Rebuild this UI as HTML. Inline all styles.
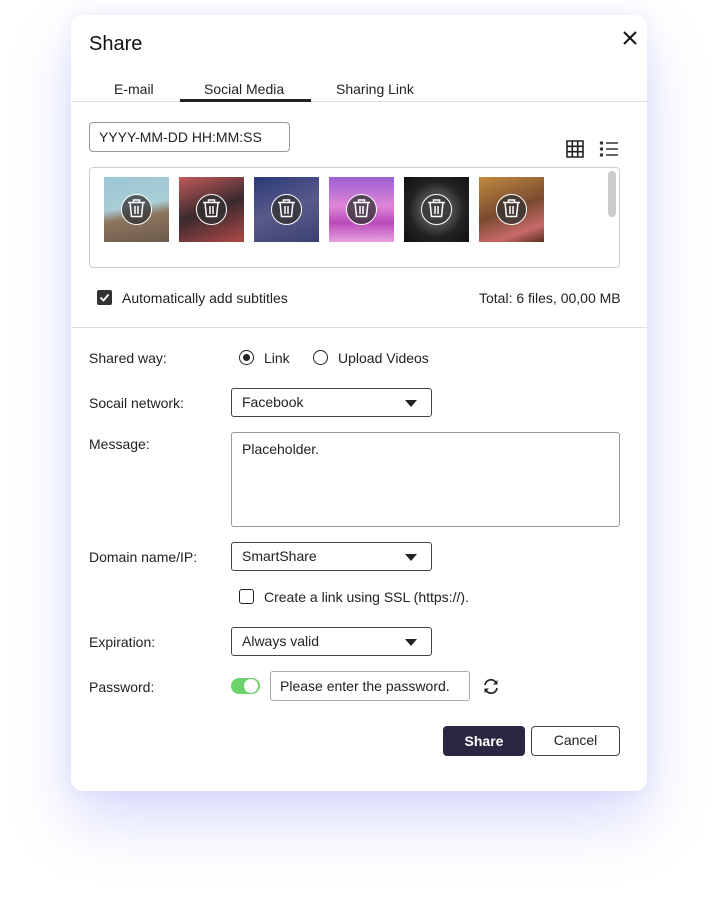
<!DOCTYPE html>
<html><head><meta charset="utf-8">
<style>
*{box-sizing:border-box;margin:0;padding:0}
body{width:719px;height:918px;background:#fff;font-family:"Liberation Sans",Arial,sans-serif;color:#222;position:relative;overflow:hidden}
.dlg{position:absolute;left:71px;top:15px;width:576px;height:776px;background:#fff;border-radius:12px;box-shadow:0 30px 60px rgba(120,130,240,0.28),0 0 20px rgba(120,130,240,0.12)}
.a{position:absolute}
.t{font-size:14px;color:#222;white-space:nowrap}
.box{position:absolute;border:1px solid #999;border-radius:3px;background:#fff}
.sel{position:absolute;border:1px solid #444;border-radius:3px;background:#fff;font-size:14px;padding-left:10px;line-height:27px}
.sel svg{position:absolute;right:14px;top:11px}
.th{position:absolute;top:177px;width:65px;height:65px}
.tc{position:absolute;left:17px;top:17px;width:31px;height:31px;border-radius:50%;background:rgba(50,50,50,0.75);border:1.5px solid #fff}
</style></head><body>
<div class="dlg"></div>
<div class="a" style="left:89px;top:33px;font-size:20px;color:#111">Share</div>
<svg class="a" style="left:623px;top:31px" width="14" height="14" viewBox="0 0 14 14"><path d="M1 1L13 13M13 1L1 13" stroke="#111" stroke-width="2"/></svg>
<div class="a t" style="left:114px;top:81px">E-mail</div>
<div class="a t" style="left:204px;top:81px">Social Media</div>
<div class="a t" style="left:336px;top:81px">Sharing Link</div>
<div class="a" style="left:72px;top:101px;width:575px;height:1px;background:#ddd"></div>
<div class="a" style="left:180px;top:99px;width:131px;height:3px;background:#222"></div>
<div class="box" style="left:89px;top:122px;width:201px;height:30px;border-radius:4px;font-size:14px;padding-left:9px;line-height:28px">YYYY-MM-DD HH:MM:SS</div>
<svg class="a" style="left:566px;top:140px" width="18" height="18" viewBox="0 0 18 18"><path d="M1 1h16v16H1zM6.3 1v16M11.7 1v16M1 6.3h16M1 11.7h16" stroke="#222" stroke-width="1.6" fill="none"/></svg>
<svg class="a" style="left:599px;top:140px" width="20" height="18" viewBox="0 0 20 18"><circle cx="2.5" cy="3" r="1.7" fill="#333"/><circle cx="2.5" cy="9" r="1.7" fill="#333"/><circle cx="2.5" cy="15" r="1.7" fill="#333"/><path d="M7 3h12M7 9h12M7 15h12" stroke="#333" stroke-width="1.5"/></svg>
<div class="box" style="left:89px;top:167px;width:531px;height:101px;border-color:#ccc;border-radius:4px"></div>
<div class="a" style="left:608px;top:171px;width:8px;height:46px;border-radius:4px;background:#ccc"></div>
<div class="th" style="left:104px;background:linear-gradient(170deg,#9cc7d4 0%,#a9ccd5 45%,#8d7660 60%,#6b5a48 100%)"><div class="tc"></div></div>
<div class="th" style="left:179px;background:linear-gradient(160deg,#c45a5a,#3a2a2e 50%,#b04848)"><div class="tc"></div></div>
<div class="th" style="left:254px;background:linear-gradient(160deg,#2a3a78,#5a5a8a 50%,#3a4270)"><div class="tc"></div></div>
<div class="th" style="left:329px;background:linear-gradient(180deg,#9a5fd0,#e086d8 45%,#b84ab8 70%,#e7a0e0)"><div class="tc"></div></div>
<div class="th" style="left:404px;background:radial-gradient(circle at 50% 50%,#888,#222 60%,#111)"><div class="tc"></div></div>
<div class="th" style="left:479px;background:linear-gradient(160deg,#c08a40,#7a4a30 50%,#c86a6a 80%,#5a3020)"><div class="tc"></div></div>
<svg class="a" style="left:104px;top:177px" width="450" height="65" viewBox="0 0 450 65">
<g id="tr" fill="none" stroke="#fff" stroke-width="1.5"><path d="M24 25.5h17M29.5 25.5v-2.5h6v2.5M26 25.5l1.5 14h10l1.5-14M31 29v8M34 29v8"/></g>
<use href="#tr" x="75"/><use href="#tr" x="150"/><use href="#tr" x="225"/><use href="#tr" x="300"/><use href="#tr" x="375"/>
</svg>
<div class="a" style="left:97px;top:290px;width:15px;height:15px;background:#333;border-radius:2px"></div>
<svg class="a" style="left:97px;top:290px" width="15" height="15"><path d="M3.5 7.5l3 3 5-6" stroke="#fff" stroke-width="1.8" fill="none"/></svg>
<div class="a t" style="left:122px;top:290px">Automatically add subtitles</div>
<div class="a t" style="left:479px;top:290px">Total: 6 files, 00,00 MB</div>
<div class="a" style="left:72px;top:327px;width:575px;height:1px;background:#ddd"></div>
<div class="a t" style="left:89px;top:350px">Shared way:</div>
<div class="a" style="left:239px;top:350px;width:15px;height:15px;border:1.5px solid #222;border-radius:50%"></div>
<div class="a" style="left:243px;top:354px;width:7px;height:7px;background:#222;border-radius:50%"></div>
<div class="a t" style="left:264px;top:350px">Link</div>
<div class="a" style="left:313px;top:350px;width:15px;height:15px;border:1.5px solid #222;border-radius:50%"></div>
<div class="a t" style="left:338px;top:350px">Upload Videos</div>
<div class="a t" style="left:89px;top:395px">Socail network:</div>
<div class="sel" style="left:231px;top:388px;width:201px;height:29px">Facebook<svg width="12" height="7"><path d="M0 0h12L6 7z" fill="#222"/></svg></div>
<div class="a t" style="left:89px;top:436px">Message:</div>
<div class="box" style="left:231px;top:432px;width:389px;height:95px;font-size:14px;padding:8px 10px">Placeholder.</div>
<div class="a t" style="left:89px;top:549px">Domain name/IP:</div>
<div class="sel" style="left:231px;top:542px;width:201px;height:29px">SmartShare<svg width="12" height="7"><path d="M0 0h12L6 7z" fill="#222"/></svg></div>
<div class="a" style="left:239px;top:589px;width:15px;height:15px;border:1.5px solid #222;border-radius:3px"></div>
<div class="a t" style="left:264px;top:589px">Create a link using SSL (https://).</div>
<div class="a t" style="left:89px;top:634px">Expiration:</div>
<div class="sel" style="left:231px;top:627px;width:201px;height:29px">Always valid<svg width="12" height="7"><path d="M0 0h12L6 7z" fill="#222"/></svg></div>
<div class="a t" style="left:89px;top:679px">Password:</div>
<div class="a" style="left:231px;top:678px;width:29px;height:16px;border-radius:8px;background:#6ad46a"></div>
<div class="a" style="left:244px;top:679px;width:14px;height:14px;border-radius:50%;background:#fff"></div>
<div class="box" style="left:270px;top:671px;width:200px;height:30px;font-size:14px;padding-left:9px;line-height:28px;border-color:#aaa">Please enter the password.</div>
<svg class="a" style="left:482px;top:678px" width="18" height="17" viewBox="0 0 18 17"><path d="M3 7A6 6 0 0 1 14.5 5.5M15 10A6 6 0 0 1 3.5 11.5" stroke="#222" stroke-width="1.7" fill="none"/><path d="M15.5 2v4.5H11z" fill="#222"/><path d="M2.5 15v-4.5H7z" fill="#222"/></svg>
<div class="a" style="left:443px;top:726px;width:82px;height:30px;background:#2a2742;border-radius:4px;color:#fff;font-size:14px;text-align:center;line-height:30px;font-weight:bold">Share</div>
<div class="a" style="left:531px;top:726px;width:89px;height:30px;border:1.5px solid #444;border-radius:4px;font-size:14px;text-align:center;line-height:27px">Cancel</div>
</body></html>
